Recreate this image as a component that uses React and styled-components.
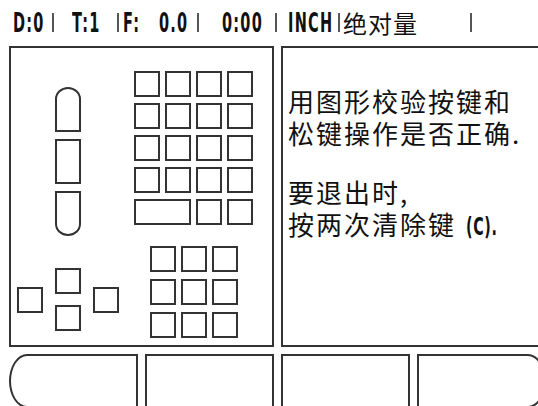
import React from 'react';
import styled, { createGlobalStyle } from 'styled-components';

const GlobalStyle = createGlobalStyle`
  html, body {
    margin: 0;
    padding: 0;
    background: #fff;
    overflow: hidden;
  }
  body {
    font-family: "Noto Sans CJK SC", "DejaVu Sans", sans-serif;
    color: #111;
  }
`;

const Screen = styled.div`
  width: 560px;
  height: 406px;
  overflow: hidden;
`;

const StatusBar = styled.div`
  display: flex;
  align-items: flex-start;
  height: 46px;
  box-sizing: border-box;
  padding: 10px 0 0 13px;
`;

const Field = styled.div`
  flex: none;
  width: ${(p) => p.$w}px;
  height: 26px;
`;

const Mono = styled.span`
  display: inline-block;
  font-family: "DejaVu Sans Condensed", "DejaVu Sans", sans-serif;
  font-weight: bold;
  font-size: 26px;
  line-height: 26px;
  letter-spacing: 2px;
  white-space: nowrap;
  transform: scaleX(0.62);
  transform-origin: 0 0;
`;

const Cjk = styled.span`
  display: inline-block;
  font-family: "Noto Sans CJK SC", sans-serif;
  font-size: 24px;
  line-height: 26px;
  letter-spacing: 1px;
  white-space: nowrap;
`;

const Sep = styled.span`
  display: inline-block;
  width: 2px;
  height: 19px;
  margin-top: 3px;
  background: #555;
`;

const Grid = styled.div`
  display: grid;
  grid-template-columns: repeat(4, 129px);
  grid-template-rows: 301px 54px;
  gap: 7px;
  padding-left: 9px;
`;

const Panel = styled.div`
  grid-column: span 2;
  box-sizing: border-box;
  border: 2px solid #333;
  background: #fff;
`;

const KeypadPanel = styled(Panel)`
  display: flex;
  align-items: flex-start;
  gap: 16px;
  padding: 23px 0 0 7px;
`;

const SideColumn = styled.div`
  width: 100px;
  display: flex;
  flex-direction: column;
  align-items: center;
  padding-top: 16px;
  gap: 32px;
`;

const TallKeys = styled.div`
  display: flex;
  flex-direction: column;
  gap: 7px;
`;

const Key = styled.div`
  box-sizing: border-box;
  width: ${(p) => p.$w || 26}px;
  height: ${(p) => p.$h || 26}px;
  border: 2px solid #333;
  border-radius: ${(p) => p.$radius || '0'};
  grid-column: span ${(p) => p.$span || 1};
`;

const ArrowCluster = styled.div`
  display: flex;
  align-items: center;
  gap: 12px;
`;

const ArrowStack = styled.div`
  display: flex;
  flex-direction: column;
  gap: 11px;
`;

const MainKeys = styled.div`
  display: flex;
  flex-direction: column;
  gap: 21px;
`;

const KeyGrid = styled.div`
  display: grid;
  grid-template-columns: repeat(${(p) => p.$cols}, 26px);
  grid-auto-rows: 26px;
  column-gap: 5px;
  row-gap: ${(p) => p.$rowGap}px;
  margin-left: ${(p) => p.$offset || 0}px;
`;

const HelpPanel = styled(Panel)`
  padding: 37px 0 0 5px;
`;

const Para = styled.p`
  margin: 0 0 27px;
  font-size: 26px;
  line-height: 32px;
  letter-spacing: 2px;
  white-space: nowrap;
`;

const Bold = styled.span`
  display: inline-block;
  width: 32px;
  margin-left: 10px;
  font-family: "DejaVu Sans Condensed", "DejaVu Sans", sans-serif;
  font-weight: bold;
  font-size: 24px;
  letter-spacing: 1px;
  transform: scaleX(0.66);
  transform-origin: 0 50%;
`;

const SoftKey = styled.div`
  box-sizing: border-box;
  border: 2px solid #333;
  border-radius: ${(p) =>
    p.$side === 'left'
      ? '18px 0 0 18px / 27px 0 0 27px'
      : p.$side === 'right'
      ? '0 18px 18px 0 / 0 27px 27px 0'
      : '0'};
`;

const status = [
  { text: 'D:0', w: 39 },
  { sep: true, w: 20 },
  { text: 'T:1', w: 45 },
  { sep: true, w: 6 },
  { text: 'F:', w: 36 },
  { text: '0.0', w: 38 },
  { sep: true, w: 25 },
  { text: '0:00', w: 53 },
  { sep: true, w: 13 },
  { text: 'INCH', w: 50 },
  { sep: true, w: 5 },
  { cjk: '绝对量', w: 127 },
  { sep: true, w: 10 },
];

export default function App() {
  return (
    <>
      <GlobalStyle />
      <Screen>
        <StatusBar>
          {status.map((s, i) => (
            <Field key={i} $w={s.w}>
              {s.sep && <Sep />}
              {s.text && <Mono>{s.text}</Mono>}
              {s.cjk && <Cjk>{s.cjk}</Cjk>}
            </Field>
          ))}
        </StatusBar>
        <Grid>
          <KeypadPanel>
            <SideColumn>
              <TallKeys>
                <Key $h={45} $radius="13px 13px 0 0 / 12px 12px 0 0" />
                <Key $h={45} />
                <Key $h={45} $radius="0 0 13px 13px / 0 0 12px 12px" />
              </TallKeys>
              <ArrowCluster>
                <Key />
                <ArrowStack>
                  <Key />
                  <Key />
                </ArrowStack>
                <Key />
              </ArrowCluster>
            </SideColumn>
            <MainKeys>
              <KeyGrid $cols={4} $rowGap={6}>
                {Array.from({ length: 16 }).map((_, i) => (
                  <Key key={i} />
                ))}
                <Key $w={57} $span={2} />
                <Key />
                <Key />
              </KeyGrid>
              <KeyGrid $cols={3} $rowGap={7} $offset={16}>
                {Array.from({ length: 9 }).map((_, i) => (
                  <Key key={i} />
                ))}
              </KeyGrid>
            </MainKeys>
          </KeypadPanel>
          <HelpPanel>
            <Para>
              用图形校验按键和
              <br />
              松键操作是否正确.
            </Para>
            <Para>
              要退出时,
              <br />
              按两次清除键<Bold>(C).</Bold>
            </Para>
          </HelpPanel>
          <SoftKey $side="left" />
          <SoftKey />
          <SoftKey />
          <SoftKey $side="right" />
        </Grid>
      </Screen>
    </>
  );
}
